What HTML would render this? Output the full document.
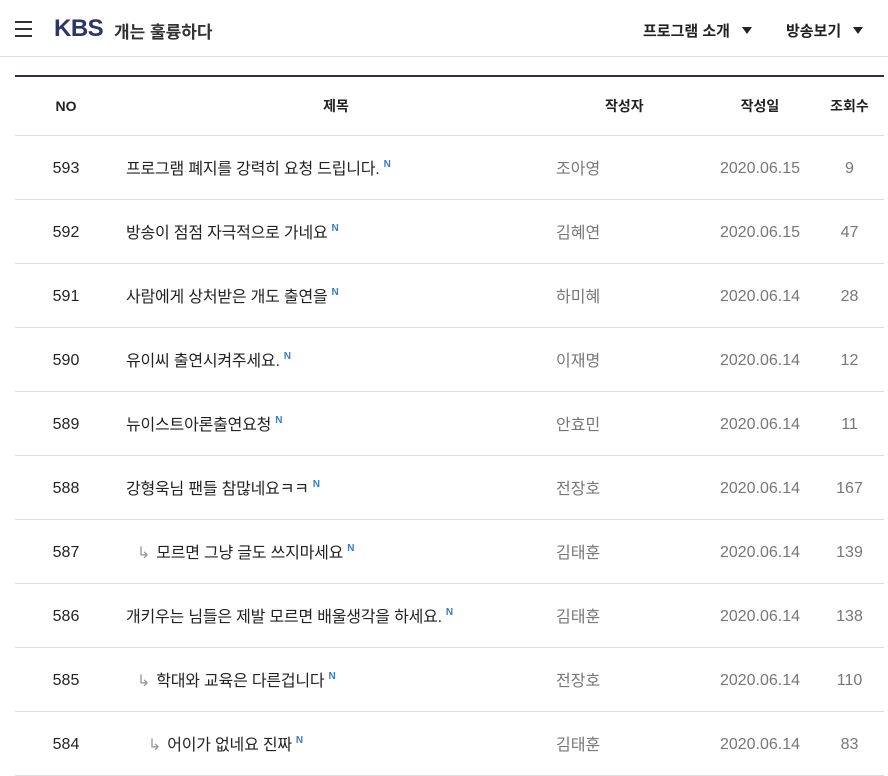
<!DOCTYPE html>
<html><head><meta charset="utf-8"><style>
*{margin:0;padding:0;box-sizing:border-box}
body{width:888px;height:772px;overflow:hidden;background:#fff;font-family:"Liberation Sans","Noto Sans CJK KR",sans-serif;color:#222}
.hd{height:57px;border-bottom:1px solid #ddd;position:relative}
.hb{position:absolute;left:15px;top:21px;width:17px}
.hb i{display:block;height:2px;background:#333;margin-bottom:5px}
.logo{position:absolute;left:54px;top:15px;font-size:24px;font-weight:bold;color:#2b3566;letter-spacing:-0.5px}
.tt{position:absolute;left:114px;top:18px;font-size:17px;font-weight:bold;color:#333}
.nav{position:absolute;top:20px;font-size:15px;font-weight:bold;color:#222}
.nav b{display:inline-block;width:0;height:0;border-left:5px solid transparent;border-right:5px solid transparent;border-top:7px solid #222;margin-left:12px;vertical-align:2px}
table{position:absolute;left:15px;top:75px;width:869px;border-collapse:collapse;border-top:2px solid #2b2f55;table-layout:fixed}
td,th{height:64px;border-bottom:1px solid #ddd;font-size:16px}
th{height:59px;font-size:14px;font-weight:bold;color:#222}
td{color:#777}
td.n{color:#222;text-align:center;padding-top:4px}
td.t{color:#222;white-space:nowrap;letter-spacing:-0.2px}
td.c{text-align:center;padding-top:4px}
sup{color:#3a7bc8;font-size:10px;font-weight:bold;margin-left:4px;vertical-align:7px}
.ar{color:#999;margin-right:6px}
</style></head><body>
<div class="hd"><div class="hb"><i></i><i></i><i></i></div><div class="logo">KBS</div><div class="tt">개는 훌륭하다</div>
<div class="nav" style="left:643px">프로그램 소개<b></b></div><div class="nav" style="left:786px">방송보기<b></b></div></div>
<table>
<colgroup><col style="width:102px"><col style="width:438px"><col style="width:150px"><col style="width:110px"><col style="width:69px"></colgroup>
<tr><th>NO</th><th style="text-align:center">제목</th><th style="text-align:left;padding-left:50px">작성자</th><th style="text-align:center">작성일</th><th style="text-align:center">조회수</th></tr>
<tr><td class="n">593</td><td class="t" style="padding-left:9px">프로그램 폐지를 강력히 요청 드립니다.<sup>N</sup></td><td style="padding-left:1px">조아영</td><td class="c">2020.06.15</td><td class="c">9</td></tr>
<tr><td class="n">592</td><td class="t" style="padding-left:9px">방송이 점점 자극적으로 가네요<sup>N</sup></td><td style="padding-left:1px">김혜연</td><td class="c">2020.06.15</td><td class="c">47</td></tr>
<tr><td class="n">591</td><td class="t" style="padding-left:9px">사람에게 상처받은 개도 출연을<sup>N</sup></td><td style="padding-left:1px">하미혜</td><td class="c">2020.06.14</td><td class="c">28</td></tr>
<tr><td class="n">590</td><td class="t" style="padding-left:9px">유이씨 출연시켜주세요.<sup>N</sup></td><td style="padding-left:1px">이재명</td><td class="c">2020.06.14</td><td class="c">12</td></tr>
<tr><td class="n">589</td><td class="t" style="padding-left:9px">뉴이스트아론출연요청<sup>N</sup></td><td style="padding-left:1px">안효민</td><td class="c">2020.06.14</td><td class="c">11</td></tr>
<tr><td class="n">588</td><td class="t" style="padding-left:9px">강형욱님 팬들 참많네요ㅋㅋ<sup>N</sup></td><td style="padding-left:1px">전장호</td><td class="c">2020.06.14</td><td class="c">167</td></tr>
<tr><td class="n">587</td><td class="t" style="padding-left:20px"><span class="ar">↳</span>모르면 그냥 글도 쓰지마세요<sup>N</sup></td><td style="padding-left:1px">김태훈</td><td class="c">2020.06.14</td><td class="c">139</td></tr>
<tr><td class="n">586</td><td class="t" style="padding-left:9px">개키우는 님들은 제발 모르면 배울생각을 하세요.<sup>N</sup></td><td style="padding-left:1px">김태훈</td><td class="c">2020.06.14</td><td class="c">138</td></tr>
<tr><td class="n">585</td><td class="t" style="padding-left:20px"><span class="ar">↳</span>학대와 교육은 다른겁니다<sup>N</sup></td><td style="padding-left:1px">전장호</td><td class="c">2020.06.14</td><td class="c">110</td></tr>
<tr><td class="n">584</td><td class="t" style="padding-left:31px"><span class="ar">↳</span>어이가 없네요 진짜<sup>N</sup></td><td style="padding-left:1px">김태훈</td><td class="c">2020.06.14</td><td class="c">83</td></tr>
</table>
</body></html>
